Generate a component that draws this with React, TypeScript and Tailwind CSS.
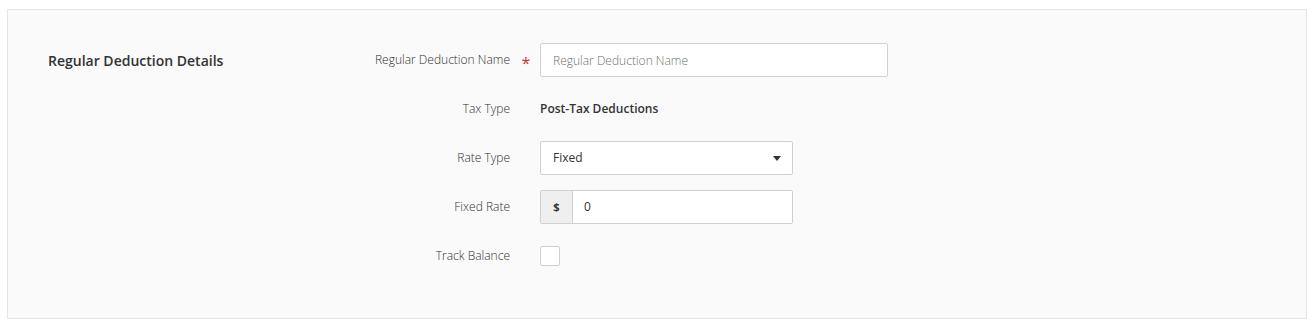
const font = { fontFamily: '"Open Sans", "Noto Sans", sans-serif' };

function Label({ children, required }: { children: React.ReactNode; required?: boolean }) {
  return (
    <>
      <div className="w-[212px] text-right text-[12px] font-light text-[#2f2f2f]">{children}</div>
      <div className="w-[30px] h-full flex items-center justify-center pl-[2px]">
        {required && <span className="text-[16px] leading-none text-[#d0312d] translate-y-[3px]">*</span>}
      </div>
    </>
  );
}

export default function App() {
  return (
    <div className="bg-white w-[1316px] h-[329px] pt-[9px] pl-[7px]" style={font}>
      <div className="w-[1300px] h-[310px] bg-[#fafafa] border border-[#e6e6e6] flex pl-10 pt-[33px]">
        <div className="w-[250px] h-[34px] flex items-center text-[14px] font-semibold text-[#333]">
          Regular Deduction Details
        </div>

        <div className="flex flex-col gap-[15px]">
          <div className="flex items-center h-[34px]">
            <Label required>Regular Deduction Name</Label>
            <input
              className="w-[348px] h-[34px] bg-white border border-[#d0d0d0] rounded-[2px] px-3 text-[12px] font-light text-[#333] placeholder:text-[#6f6f6f] outline-none"
              placeholder="Regular Deduction Name"
            />
          </div>

          <div className="flex items-center h-[34px]">
            <Label>Tax Type</Label>
            <div className="text-[12px] font-semibold text-[#333]">Post-Tax Deductions</div>
          </div>

          <div className="flex items-center h-[34px]">
            <Label>Rate Type</Label>
            <div className="w-[253px] h-[34px] bg-white border border-[#d0d0d0] rounded-[2px] pl-3 pr-[11px] flex items-center justify-between text-[12px] text-[#333]">
              <span>Fixed</span>
              <svg width="8" height="5" viewBox="0 0 8 5">
                <path d="M0 0h8L4 5z" fill="#333" />
              </svg>
            </div>
          </div>

          <div className="flex items-center h-[34px]">
            <Label>Fixed Rate</Label>
            <div className="w-[253px] h-[34px] bg-white border border-[#d0d0d0] rounded-[2px] flex text-[12px] text-[#333]">
              <div className="w-[32px] bg-[#efefef] border-r border-[#d0d0d0] flex items-center justify-center font-bold text-[11px]">
                $
              </div>
              <div className="flex items-center pl-[11px]">0</div>
            </div>
          </div>

          <div className="flex items-center h-[34px]">
            <Label>Track Balance</Label>
            <div className="w-5 h-5 bg-white border border-[#d0d0d0] rounded-[2px]" />
          </div>
        </div>
      </div>
    </div>
  );
}
